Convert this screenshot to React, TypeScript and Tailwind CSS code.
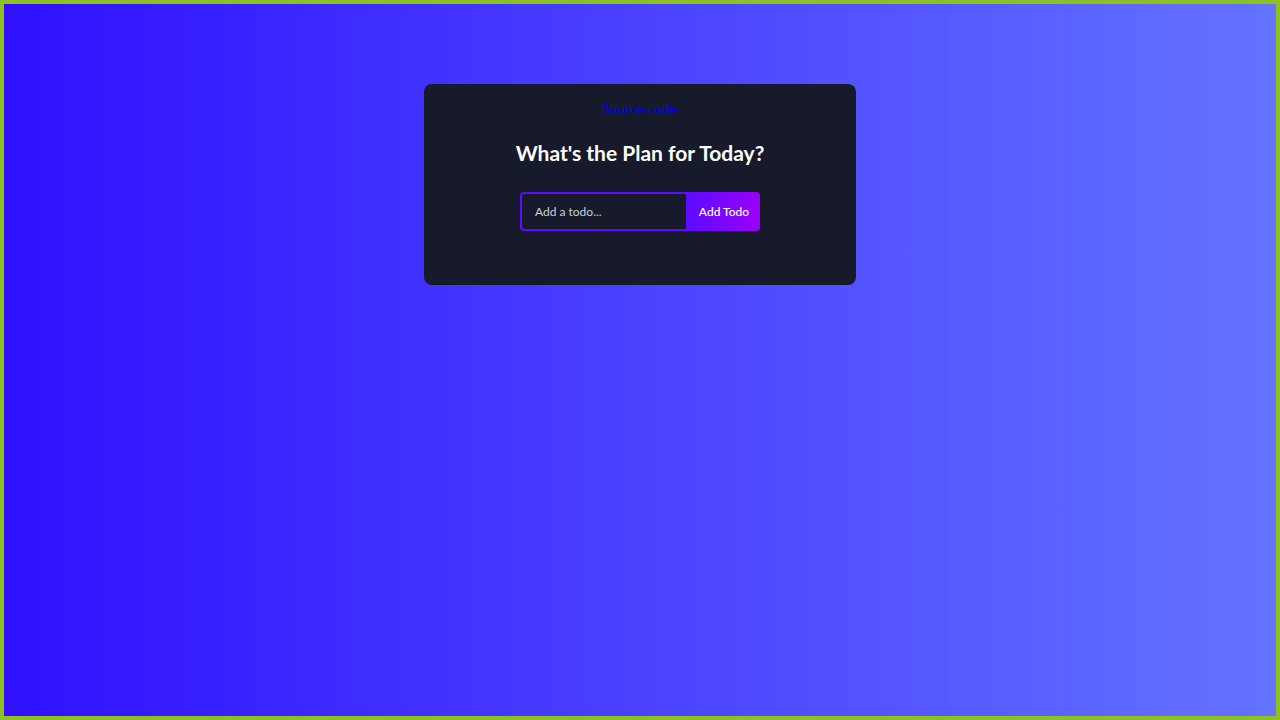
export default function App() {
  return (
    <div className="h-[720px] w-[1280px] border-4 border-[#8bc220] bg-[linear-gradient(90deg,#3010ff_0%,#6473ff_100%)] flex justify-center font-['Lato','Noto_Sans',sans-serif]">
      <div className="mt-[80px] h-[201px] w-[432px] rounded-[8px] bg-[#161a2b] flex flex-col items-center">
        <a href="#" className="mt-[16px] text-[14px] leading-[18px] font-medium text-[#0000ee] underline">
          Source code
        </a>
        <h1 className="mt-[22px] text-[21px] leading-[26px] font-bold text-white">What's the Plan for Today?</h1>
        <div className="mt-[26px] flex">
          <div className="h-[39px] w-[168px] rounded-l-[4px] border-2 border-[#5d0cff] flex items-center pl-[13px] text-[12px] text-[#d0d0d8]">
            Add a todo...
          </div>
          <div className="h-[39px] w-[72px] rounded-r-[4px] bg-[linear-gradient(90deg,#5d0cff_0%,#9b00fa_100%)] flex items-center justify-center text-[12px] font-medium text-white">
            Add Todo
          </div>
        </div>
      </div>
    </div>
  );
}
